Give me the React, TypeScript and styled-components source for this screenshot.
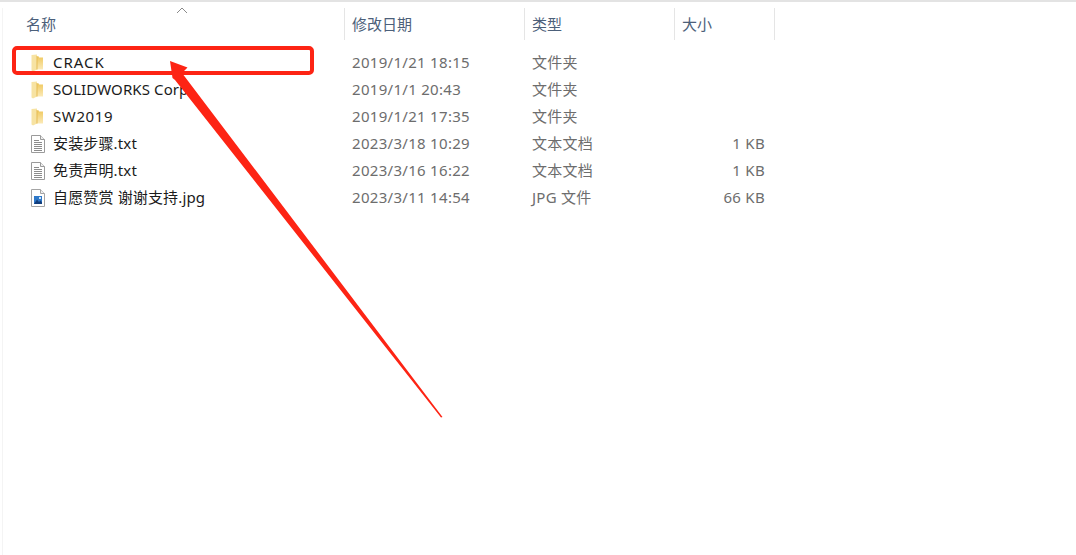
import React from 'react'
import styled, { createGlobalStyle } from 'styled-components'

const GlobalStyle = createGlobalStyle`
    html, body {
        margin: 0;
        padding: 0;
        background: #fff;
    }
`

type FileKind = 'folder' | 'text' | 'image'

const files: { name: string; date: string; type: string; size: string; kind: FileKind; tracking: number }[] = [
    { name: 'CRACK', date: '2019/1/21 18:15', type: '文件夹', size: '', kind: 'folder', tracking: 1 },
    { name: 'SOLIDWORKS Corp', date: '2019/1/1 20:43', type: '文件夹', size: '', kind: 'folder', tracking: 0.1 },
    { name: 'SW2019', date: '2019/1/21 17:35', type: '文件夹', size: '', kind: 'folder', tracking: 0.6 },
    { name: '安装步骤.txt', date: '2023/3/18 10:29', type: '文本文档', size: '1 KB', kind: 'text', tracking: 0.15 },
    { name: '免责声明.txt', date: '2023/3/16 16:22', type: '文本文档', size: '1 KB', kind: 'text', tracking: 0.15 },
    { name: '自愿赞赏 谢谢支持.jpg', date: '2023/3/11 14:54', type: 'JPG 文件', size: '66 KB', kind: 'image', tracking: 0.15 },
]

const FolderIcon = () => (
    <svg width="16" height="18" viewBox="0 0 16 18">
        <defs>
            <linearGradient id="folderFill" x1="0" y1="0" x2="0" y2="1">
                <stop offset="0" stopColor="#f0c95f" />
                <stop offset="1" stopColor="#fbeab8" />
            </linearGradient>
        </defs>
        <path d="M6 2.5 L9 2.5 L9 3.5 L13 3.5 L13 15.5 L6 15.5 Z" fill="url(#folderFill)" />
        <path d="M1.5 1 L7 .5 L7 15.5 L3 17.5 L1.5 16.5 Z" fill="#f7e3a3" />
        <path d="M6.5 2 L7.5 2 L7.5 15.5 L6.5 15.5 Z" fill="#e6bc55" />
    </svg>
)

const TextIcon = () => (
    <svg width="16" height="18" viewBox="0 0 16 18">
        <path d="M1.5 .5 H10.5 L14.5 4.5 V17.5 H1.5 Z" fill="#fff" stroke="#9b9b9b" />
        <path d="M10.5 .5 V4.5 H14.5" fill="#eee" stroke="#9b9b9b" />
        <path d="M4 5.5 H9 M4 7.5 H12 M4 9.5 H12 M4 11.5 H12 M4 13.5 H12 M4 15.5 H12" stroke="#8c8c8c" />
    </svg>
)

const ImageIcon = () => (
    <svg width="16" height="18" viewBox="0 0 16 18">
        <path d="M1.5 .5 H10.5 L14.5 4.5 V17.5 H1.5 Z" fill="#fff" stroke="#a4a4a4" />
        <path d="M10.5 .5 V4.5 H14.5" fill="#eee" stroke="#a4a4a4" />
        <rect x="4" y="7" width="8" height="8" fill="#2f79c9" />
        <path d="M4 15 L7 10.5 L9 13 L10.5 11.5 L12 13.5 V15 Z" fill="#123e7c" />
        <rect x="9" y="8" width="2" height="2" fill="#cfe6fa" />
    </svg>
)

const icons: Record<FileKind, React.ReactNode> = {
    folder: <FolderIcon />,
    text: <TextIcon />,
    image: <ImageIcon />,
}

const App = () => {
    return (
        <Page>
            <GlobalStyle />
            <HeaderRow>
                <HeaderCell $width={344} $first>名称</HeaderCell>
                <HeaderCell $width={180}>修改日期</HeaderCell>
                <HeaderCell $width={150}>类型</HeaderCell>
                <HeaderCell $width={100}>大小</HeaderCell>
                <EndCell />
                <SortCaret width="12" height="7" viewBox="0 0 12 7">
                    <path d="M1 6 L6 1 L11 6" fill="none" stroke="#8a8a8a" />
                </SortCaret>
            </HeaderRow>
            <List>
                {files.map((file) => (
                    <Row key={file.name}>
                        <NameCell $tracking={file.tracking}>
                            <IconSlot>{icons[file.kind]}</IconSlot>
                            {file.name}
                        </NameCell>
                        <DateCell>{file.date}</DateCell>
                        <TypeCell>{file.type}</TypeCell>
                        <SizeCell>{file.size}</SizeCell>
                    </Row>
                ))}
            </List>
            <Highlight />
            <Arrow viewBox="0 0 1076 555" width="1076" height="555">
                <polygon points="170,61 187.5,67.5 182,73 442.5,417 441,417.5 175,80 172.5,78" fill="#fd2414" />
            </Arrow>
        </Page>
    )
}

const fontStack = `"Noto Sans", "Noto Sans CJK SC", sans-serif`

const Page = styled.div`
    position: relative;
    width: 1076px;
    height: 555px;
    box-sizing: border-box;
    overflow: hidden;
    background: #fff;
    border-top: 2px solid #e3e3e3;
    font-family: ${fontStack};
    font-size: 15px;
    &::before {
        content: '';
        position: absolute;
        left: 2px;
        top: 6px;
        bottom: 0;
        width: 1px;
        background: #f4f4f4;
    }
`

const HeaderRow = styled.div`
    position: relative;
    display: flex;
    height: 32px;
    margin-top: 6px;
`

const HeaderCell = styled.div<{ $width: number; $first?: boolean }>`
    box-sizing: border-box;
    width: ${(p) => p.$width}px;
    padding-left: ${(p) => (p.$first ? 26 : 7)}px;
    border-left: ${(p) => (p.$first ? 'none' : '1px solid #e5e5e5')};
    color: #4c607a;
    line-height: 32px;
`

const EndCell = styled.div`
    width: 1px;
    background: #e5e5e5;
`

const SortCaret = styled.svg`
    position: absolute;
    left: 176px;
    top: -1px;
`

const List = styled.div`
    margin-top: 9px;
`

const Row = styled.div`
    display: grid;
    grid-template-columns: 344px 180px 150px 91px;
    height: 27px;
    line-height: 27px;
`

const NameCell = styled.div<{ $tracking: number }>`
    display: flex;
    align-items: center;
    padding-left: 30px;
    color: #1b1b1b;
    white-space: pre;
    letter-spacing: ${(p) => p.$tracking}px;
`

const IconSlot = styled.span`
    display: flex;
    width: 23px;
`

const DateCell = styled.div`
    padding-left: 8px;
    color: #6d6d6d;
    letter-spacing: 0.3px;
`

const TypeCell = styled.div`
    padding-left: 8px;
    color: #6d6d6d;
    letter-spacing: 0.25px;
`

const SizeCell = styled.div`
    text-align: right;
    color: #6d6d6d;
    letter-spacing: 0.3px;
`

const Highlight = styled.div`
    position: absolute;
    left: 12px;
    top: 44px;
    width: 302px;
    height: 29px;
    box-sizing: border-box;
    border: 4px solid #fd2414;
    border-radius: 5px;
`

const Arrow = styled.svg`
    position: absolute;
    left: 0;
    top: -2px;
`

export default App
